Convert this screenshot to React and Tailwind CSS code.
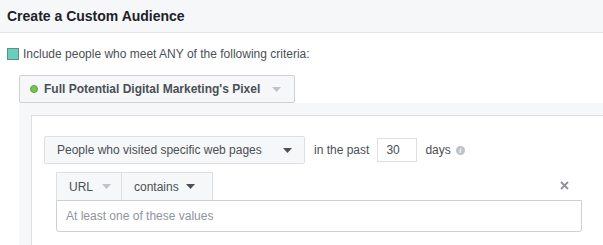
import React from "react";

function Caret({ light }) {
  return (
    <svg width="9" height="5" viewBox="0 0 9 5" className="shrink-0">
      <path d="M0 0h9L4.5 5z" fill={light ? "#bec2c9" : "#4b4f56"} />
    </svg>
  );
}

export default function App() {
  return (
    <div
      className="w-[603px] h-[245px] overflow-hidden bg-white text-[#4b4f56]"
      style={{ fontFamily: '"Liberation Sans", Arial, sans-serif' }}
    >
      {/* header */}
      <div className="h-[33px] bg-[#f6f7f9] border-b border-[#e5e5e5] px-[7px] flex items-center">
        <span className="text-[14px] font-bold text-[#1d2129]">Create a Custom Audience</span>
      </div>

      {/* criteria */}
      <div className="mt-[12px] px-[7px] flex items-center gap-[4px] text-[12px]">
        <span className="w-[12px] h-[12px] bg-[#6bcebb] border border-[#5d8f86] shrink-0" />
        <span>Include people who meet ANY of the following criteria:</span>
      </div>

      <div className="mt-[12px] ml-[19px]">
        <div className="w-[276px] h-[28px] bg-[#f6f7f9] border border-[#ced0d4] rounded-[2px] flex items-center pl-[10px] pr-[13px] gap-[6px]">
          <span className="w-[8px] h-[8px] rounded-full bg-[#78c257] border border-[#5aa23a]" />
          <span className="text-[12px] font-bold text-[#4b4f56]">Full Potential Digital Marketing's Pixel</span>
          <span className="ml-auto">
            <Caret light />
          </span>
        </div>

        <div className="bg-[#f6f7f9] pt-[12px] pl-[12px]">
          <div className="bg-white border-t border-l border-[#dddfe2] pt-[20px] pl-[12px] pb-[20px]">
            {/* row 1 */}
            <div className="flex items-center text-[12px]">
              <div className="w-[261px] h-[28px] bg-[#f6f7f9] border border-[#dddfe2] rounded-[2px] flex items-center pl-[12px] pr-[12px]">
                <span>People who visited specific web pages</span>
                <span className="ml-auto">
                  <Caret />
                </span>
              </div>
              <span className="ml-[9px]">in the past</span>
              <div className="ml-[8px] w-[40px] h-[24px] border border-[#dddfe2] flex items-center pl-[8px]">
                30
              </div>
              <span className="ml-[8px]">days</span>
              <span className="ml-[5px] w-[9px] h-[9px] rounded-full bg-[#bec2c9] flex items-center justify-center text-[7px] italic font-bold text-white leading-none">
                i
              </span>
            </div>

            {/* row 2 */}
            <div className="mt-[8px] ml-[12px] w-[526px]">
              <div className="flex items-center justify-between">
                <div className="h-[28px] flex border border-b-0 border-[#dddfe2] bg-[#f6f7f9] text-[12px]">
                  <div className="w-[65px] flex items-center pl-[12px] gap-[9px] border-r border-[#dddfe2]">
                    <span>URL</span>
                    <Caret light />
                  </div>
                  <div className="w-[90px] flex items-center pl-[12px] gap-[7px]">
                    <span>contains</span>
                    <Caret />
                  </div>
                </div>
                <svg width="9" height="9" viewBox="0 0 9 9" className="mr-[13px] -mt-[2px]">
                  <path d="M1 1l7 7M8 1L1 8" stroke="#90949c" strokeWidth="1.8" />
                </svg>
              </div>
              <div className="h-[32px] border border-[#ccd0d5] rounded-b-[3px] flex items-center pl-[9px] text-[12px] text-[#90949c]">
                At least one of these values
              </div>
            </div>
          </div>
        </div>
      </div>
    </div>
  );
}
